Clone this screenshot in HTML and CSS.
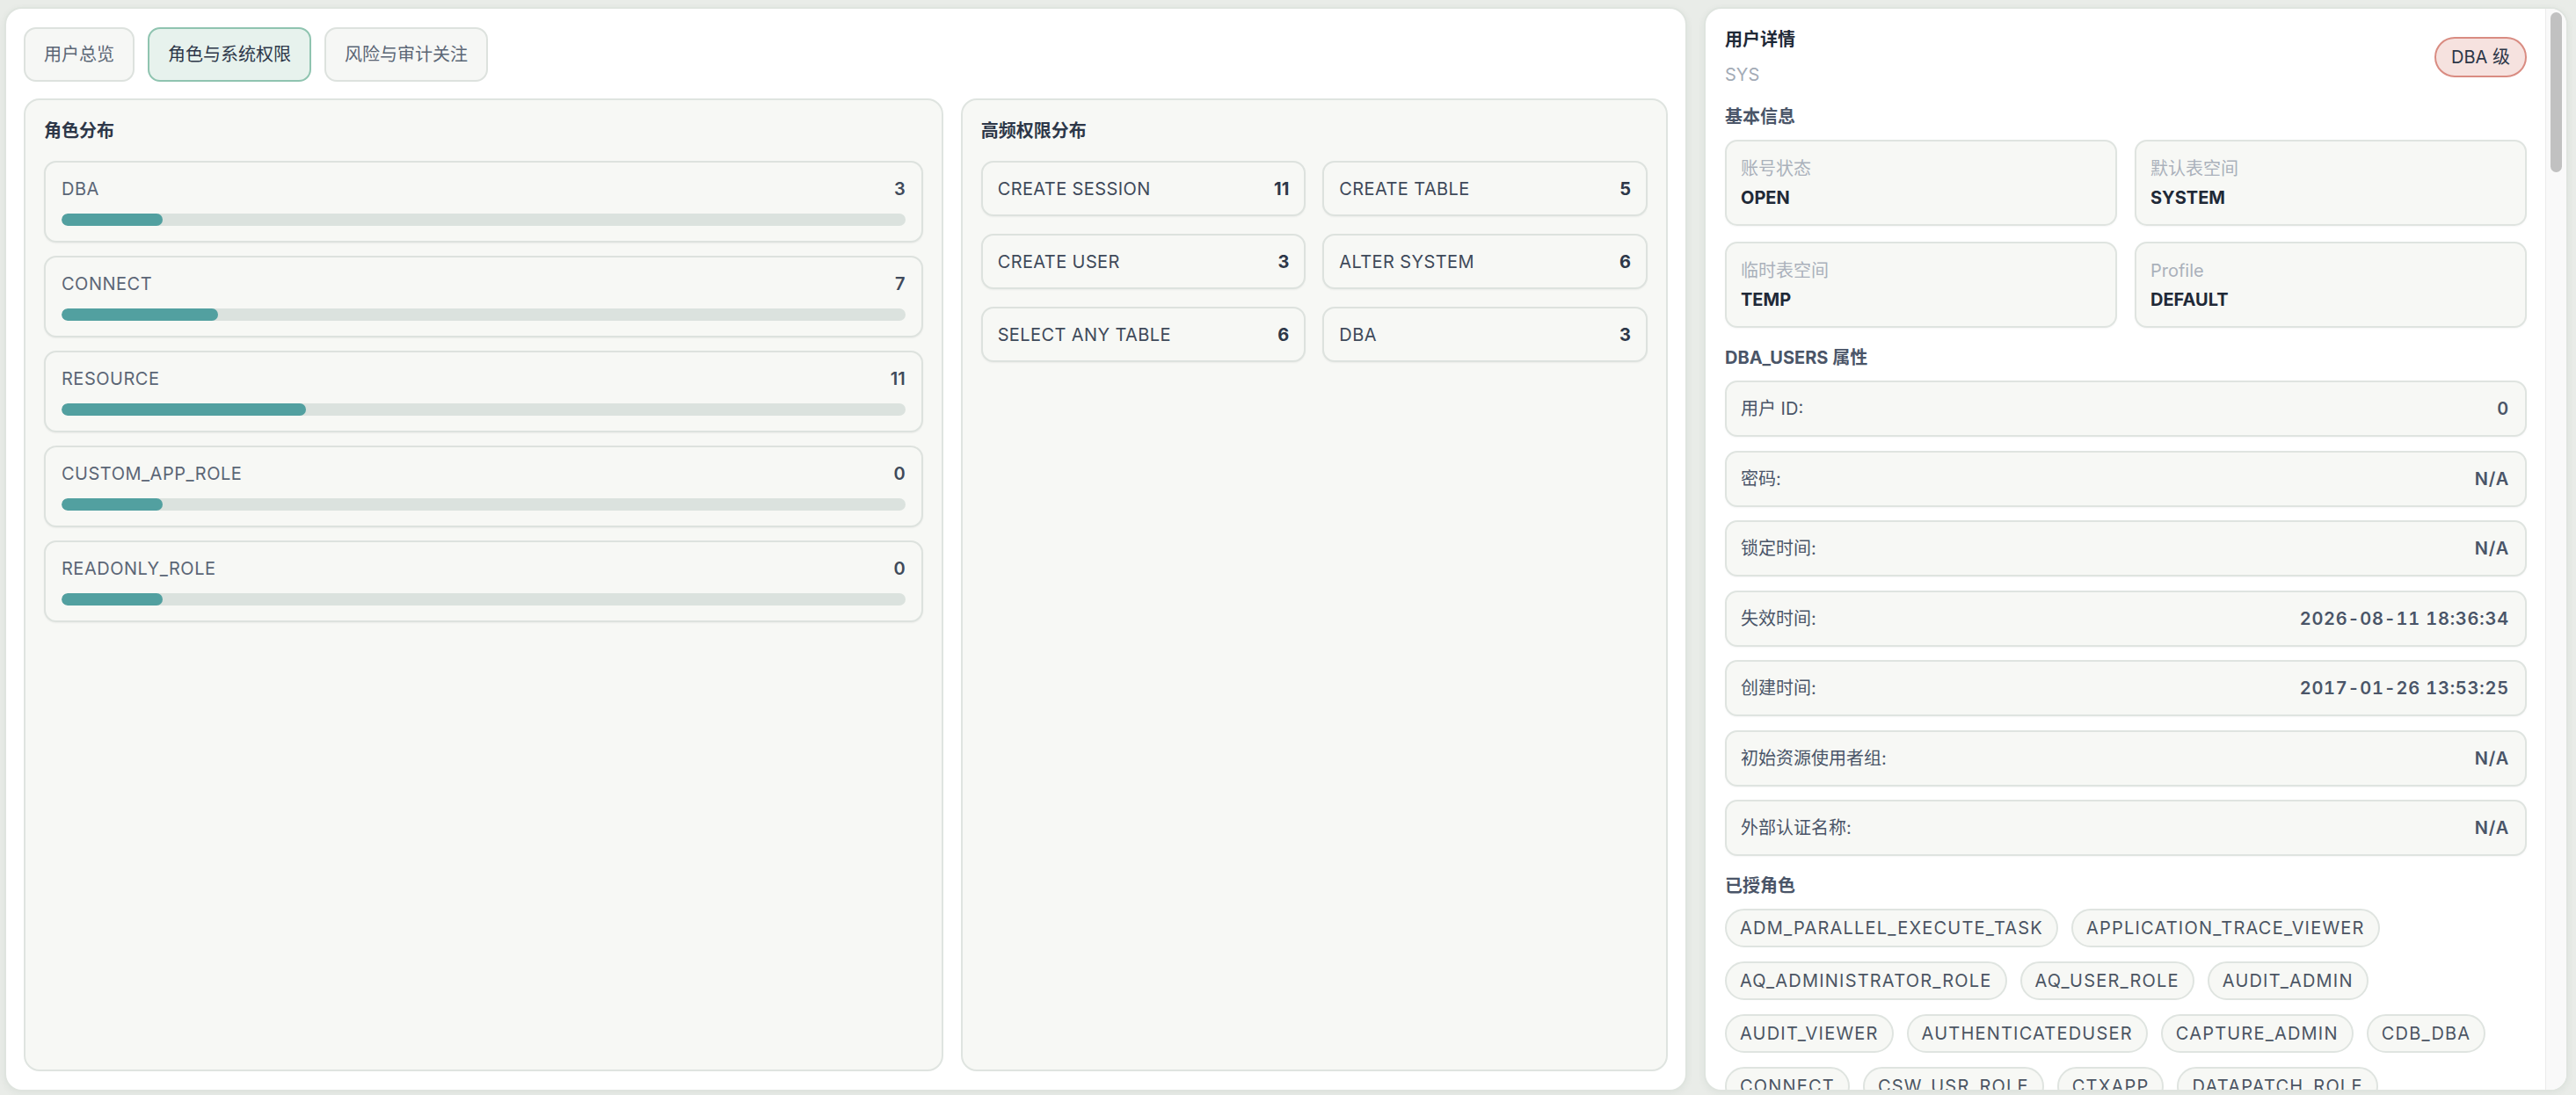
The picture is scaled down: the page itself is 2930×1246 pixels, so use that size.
FILE: index.html
```html
<!DOCTYPE html>
<html lang="zh-CN">
<head>
    <meta charset="UTF-8">
    <meta name="viewport" content="width=device-width, initial-scale=1.0">
    <title>用户权限 - 角色与系统权限</title>
    <link rel="stylesheet" href="styles.css">
</head>
<body>
    <div class="page">
        <section class="main-card">
            <div class="tabs">
                <div class="tab">用户总览</div>
                <div class="tab active">角色与系统权限</div>
                <div class="tab">风险与审计关注</div>
            </div>

            <div class="panels">
                <div class="panel">
                    <div class="panel-title">角色分布</div>
                    <div class="role-list">
                        <div class="role-item">
                            <div class="role-head"><span class="role-name">DBA</span><span class="role-count">3</span></div>
                            <div class="bar"><div class="bar-fill" style="width: 12%"></div></div>
                        </div>
                        <div class="role-item">
                            <div class="role-head"><span class="role-name">CONNECT</span><span class="role-count">7</span></div>
                            <div class="bar"><div class="bar-fill" style="width: 18.6%"></div></div>
                        </div>
                        <div class="role-item">
                            <div class="role-head"><span class="role-name">RESOURCE</span><span class="role-count">11</span></div>
                            <div class="bar"><div class="bar-fill" style="width: 29%"></div></div>
                        </div>
                        <div class="role-item">
                            <div class="role-head"><span class="role-name">CUSTOM_APP_ROLE</span><span class="role-count">0</span></div>
                            <div class="bar"><div class="bar-fill" style="width: 12%"></div></div>
                        </div>
                        <div class="role-item">
                            <div class="role-head"><span class="role-name">READONLY_ROLE</span><span class="role-count">0</span></div>
                            <div class="bar"><div class="bar-fill" style="width: 12%"></div></div>
                        </div>
                    </div>
                </div>

                <div class="panel">
                    <div class="panel-title">高频权限分布</div>
                    <div class="priv-grid">
                        <div class="priv-item"><span>CREATE SESSION</span><strong>11</strong></div>
                        <div class="priv-item"><span>CREATE TABLE</span><strong>5</strong></div>
                        <div class="priv-item"><span>CREATE USER</span><strong>3</strong></div>
                        <div class="priv-item"><span>ALTER SYSTEM</span><strong>6</strong></div>
                        <div class="priv-item"><span>SELECT ANY TABLE</span><strong>6</strong></div>
                        <div class="priv-item"><span>DBA</span><strong>3</strong></div>
                    </div>
                </div>
            </div>
        </section>

        <aside class="detail-card">
            <div class="detail-scroll">
                <div class="detail-head">
                    <div>
                        <div class="detail-title">用户详情</div>
                        <div class="detail-sub">SYS</div>
                    </div>
                    <div class="level-badge">DBA 级</div>
                </div>

                <div class="section-title">基本信息</div>
                <div class="info-grid">
                    <div class="info-card"><div class="info-label">账号状态</div><div class="info-value">OPEN</div></div>
                    <div class="info-card"><div class="info-label">默认表空间</div><div class="info-value">SYSTEM</div></div>
                    <div class="info-card"><div class="info-label">临时表空间</div><div class="info-value">TEMP</div></div>
                    <div class="info-card"><div class="info-label">Profile</div><div class="info-value">DEFAULT</div></div>
                </div>

                <div class="section-title">DBA_USERS 属性</div>
                <div class="attr-list">
                    <div class="attr-row"><span>用户 ID:</span><span class="attr-value">0</span></div>
                    <div class="attr-row"><span>密码:</span><span class="attr-value">N/A</span></div>
                    <div class="attr-row"><span>锁定时间:</span><span class="attr-value">N/A</span></div>
                    <div class="attr-row"><span>失效时间:</span><span class="attr-value">2026-08-11 18:36:34</span></div>
                    <div class="attr-row"><span>创建时间:</span><span class="attr-value">2017-01-26 13:53:25</span></div>
                    <div class="attr-row"><span>初始资源使用者组:</span><span class="attr-value">N/A</span></div>
                    <div class="attr-row"><span>外部认证名称:</span><span class="attr-value">N/A</span></div>
                </div>

                <div class="section-title">已授角色</div>
                <div class="tag-list">
                    <span class="tag">ADM_PARALLEL_EXECUTE_TASK</span>
                    <span class="tag">APPLICATION_TRACE_VIEWER</span>
                    <span class="tag">AQ_ADMINISTRATOR_ROLE</span>
                    <span class="tag">AQ_USER_ROLE</span>
                    <span class="tag">AUDIT_ADMIN</span>
                    <span class="tag">AUDIT_VIEWER</span>
                    <span class="tag">AUTHENTICATEDUSER</span>
                    <span class="tag">CAPTURE_ADMIN</span>
                    <span class="tag">CDB_DBA</span>
                    <span class="tag">CONNECT</span>
                    <span class="tag">CSW_USR_ROLE</span>
                    <span class="tag">CTXAPP</span>
                    <span class="tag">DATAPATCH_ROLE</span>
                    <span class="tag">DATAPUMP_EXP_FULL_DATABASE</span>
                    <span class="tag">DATAPUMP_IMP_FULL_DATABASE</span>
                    <span class="tag">DBA</span>
                    <span class="tag">DBFS_ROLE</span>
                    <span class="tag">DBJAVASCRIPT</span>
                    <span class="tag">DBMS_MDX_INTERNAL</span>
                    <span class="tag">EM_EXPRESS_ALL</span>
                    <span class="tag">EM_EXPRESS_BASIC</span>
                    <span class="tag">EXECUTE_CATALOG_ROLE</span>
                    <span class="tag">EXP_FULL_DATABASE</span>
                    <span class="tag">GATHER_SYSTEM_STATISTICS</span>
                    <span class="tag">GDS_CATALOG_SELECT</span>
                    <span class="tag">GGSYS_ROLE</span>
                    <span class="tag">GLOBAL_AQ_USER_ROLE</span>
                    <span class="tag">GSMADMIN_ROLE</span>
                    <span class="tag">GSMCATUSER_ROLE</span>
                    <span class="tag">GSMROOTUSER_ROLE</span>
                    <span class="tag">GSM_POOLADMIN_ROLE</span>
                    <span class="tag">HS_ADMIN_EXECUTE_ROLE</span>
                    <span class="tag">HS_ADMIN_ROLE</span>
                    <span class="tag">HS_ADMIN_SELECT_ROLE</span>
                    <span class="tag">IMP_FULL_DATABASE</span>
                    <span class="tag">JAVADEBUGPRIV</span>
                    <span class="tag">JAVAIDPRIV</span>
                    <span class="tag">JAVASYSPRIV</span>
                    <span class="tag">JAVAUSERPRIV</span>
                    <span class="tag">JAVA_ADMIN</span>
                    <span class="tag">JMXSERVER</span>
                    <span class="tag">LBAC_DBA</span>
                    <span class="tag">LOGSTDBY_ADMINISTRATOR</span>
                    <span class="tag">MAINTPLAN_APP</span>
                    <span class="tag">OEM_ADVISOR</span>
                    <span class="tag">OEM_MONITOR</span>
                    <span class="tag">OLAP_DBA</span>
                    <span class="tag">OLAP_USER</span>
                    <span class="tag">OLAP_XS_ADMIN</span>
                    <span class="tag">OPTIMIZER_PROCESSING_RATE</span>
                    <span class="tag">ORDADMIN</span>
                    <span class="tag">PDB_DBA</span>
                    <span class="tag">PROVISIONER</span>
                    <span class="tag">RDFCTX_ADMIN</span>
                    <span class="tag">RECOVERY_CATALOG_OWNER</span>
                    <span class="tag">RECOVERY_CATALOG_OWNER_VPD</span>
                    <span class="tag">RECOVERY_CATALOG_USER</span>
                    <span class="tag">RESOURCE</span>
                    <span class="tag">SCHEDULER_ADMIN</span>
                    <span class="tag">SELECT_CATALOG_ROLE</span>
                    <span class="tag">SODA_APP</span>
                    <span class="tag">SYSUMF_ROLE</span>
                    <span class="tag">WM_ADMIN_ROLE</span>
                    <span class="tag">XDBADMIN</span>
                    <span class="tag">XDB_SET_INVOKER</span>
                    <span class="tag">XDB_WEBSERVICES</span>
                    <span class="tag">XDB_WEBSERVICES_OVER_HTTP</span>
                    <span class="tag">XDB_WEBSERVICES_WITH_PUBLIC</span>
                    <span class="tag">XS_CACHE_ADMIN</span>
                    <span class="tag">XS_CONNECT</span>
                    <span class="tag">XS_NAMESPACE_ADMIN</span>
                    <span class="tag">XS_SESSION_ADMIN</span>
                </div>

                <div class="section-title">系统权限</div>
                <div class="tag-list">
                    <span class="tag">ADMINISTER ANY SQL TUNING SET</span>
                    <span class="tag">ADMINISTER DATABASE TRIGGER</span>
                    <span class="tag">ADMINISTER RESOURCE MANAGER</span>
                    <span class="tag">ADMINISTER SQL MANAGEMENT OBJECT</span>
                    <span class="tag">ADVISOR</span>
                    <span class="tag">ALTER ANY CLUSTER</span>
                    <span class="tag">ALTER ANY DIMENSION</span>
                    <span class="tag">ALTER ANY INDEX</span>
                    <span class="tag">ALTER ANY LIBRARY</span>
                    <span class="tag">ALTER ANY MATERIALIZED VIEW</span>
                    <span class="tag">ALTER ANY PROCEDURE</span>
                    <span class="tag">ALTER ANY ROLE</span>
                    <span class="tag">ALTER ANY SEQUENCE</span>
                    <span class="tag">ALTER ANY TABLE</span>
                    <span class="tag">ALTER ANY TRIGGER</span>
                    <span class="tag">ALTER ANY TYPE</span>
                    <span class="tag">ALTER DATABASE</span>
                    <span class="tag">ALTER PROFILE</span>
                    <span class="tag">ALTER SESSION</span>
                    <span class="tag">ALTER SYSTEM</span>
                    <span class="tag">ALTER TABLESPACE</span>
                    <span class="tag">ALTER USER</span>
                    <span class="tag">ANALYZE ANY</span>
                    <span class="tag">ANALYZE ANY DICTIONARY</span>
                    <span class="tag">AUDIT ANY</span>
                    <span class="tag">AUDIT SYSTEM</span>
                    <span class="tag">BACKUP ANY TABLE</span>
                    <span class="tag">BECOME USER</span>
                    <span class="tag">COMMENT ANY TABLE</span>
                    <span class="tag">CREATE ANY DIRECTORY</span>
                    <span class="tag">CREATE ANY INDEX</span>
                    <span class="tag">CREATE ANY JOB</span>
                    <span class="tag">CREATE ANY PROCEDURE</span>
                    <span class="tag">CREATE ANY SYNONYM</span>
                    <span class="tag">CREATE ANY TABLE</span>
                    <span class="tag">CREATE ANY TRIGGER</span>
                    <span class="tag">CREATE ANY VIEW</span>
                    <span class="tag">CREATE DATABASE LINK</span>
                    <span class="tag">CREATE JOB</span>
                    <span class="tag">CREATE MATERIALIZED VIEW</span>
                    <span class="tag">CREATE PROCEDURE</span>
                    <span class="tag">CREATE PROFILE</span>
                    <span class="tag">CREATE PUBLIC SYNONYM</span>
                    <span class="tag">CREATE ROLE</span>
                    <span class="tag">CREATE SEQUENCE</span>
                    <span class="tag">CREATE SESSION</span>
                    <span class="tag">CREATE SYNONYM</span>
                    <span class="tag">CREATE TABLE</span>
                    <span class="tag">CREATE TABLESPACE</span>
                    <span class="tag">CREATE TRIGGER</span>
                    <span class="tag">CREATE TYPE</span>
                    <span class="tag">CREATE USER</span>
                    <span class="tag">CREATE VIEW</span>
                    <span class="tag">DEBUG ANY PROCEDURE</span>
                    <span class="tag">DEBUG CONNECT SESSION</span>
                    <span class="tag">DELETE ANY TABLE</span>
                    <span class="tag">DROP ANY DIRECTORY</span>
                    <span class="tag">DROP ANY INDEX</span>
                    <span class="tag">DROP ANY PROCEDURE</span>
                    <span class="tag">DROP ANY ROLE</span>
                    <span class="tag">DROP ANY TABLE</span>
                    <span class="tag">DROP ANY VIEW</span>
                    <span class="tag">DROP PUBLIC SYNONYM</span>
                    <span class="tag">DROP TABLESPACE</span>
                    <span class="tag">DROP USER</span>
                    <span class="tag">EXECUTE ANY PROCEDURE</span>
                    <span class="tag">EXECUTE ANY TYPE</span>
                    <span class="tag">EXEMPT ACCESS POLICY</span>
                    <span class="tag">EXEMPT REDACTION POLICY</span>
                    <span class="tag">FLASHBACK ANY TABLE</span>
                    <span class="tag">FORCE ANY TRANSACTION</span>
                    <span class="tag">GRANT ANY OBJECT PRIVILEGE</span>
                    <span class="tag">GRANT ANY PRIVILEGE</span>
                    <span class="tag">GRANT ANY ROLE</span>
                    <span class="tag">INHERIT ANY PRIVILEGES</span>
                    <span class="tag">INSERT ANY TABLE</span>
                    <span class="tag">LOCK ANY TABLE</span>
                    <span class="tag">LOGMINING</span>
                    <span class="tag">MANAGE SCHEDULER</span>
                    <span class="tag">MANAGE TABLESPACE</span>
                    <span class="tag">QUERY REWRITE</span>
                    <span class="tag">READ ANY TABLE</span>
                    <span class="tag">RESTRICTED SESSION</span>
                    <span class="tag">RESUMABLE</span>
                    <span class="tag">SELECT ANY DICTIONARY</span>
                    <span class="tag">SELECT ANY SEQUENCE</span>
                    <span class="tag">SELECT ANY TABLE</span>
                    <span class="tag">SELECT ANY TRANSACTION</span>
                    <span class="tag">SET CONTAINER</span>
                    <span class="tag">UNLIMITED TABLESPACE</span>
                    <span class="tag">UPDATE ANY TABLE</span>
                </div>
            </div>
            <div class="scroll-track"><div class="scroll-thumb"></div></div>
        </aside>
    </div>
</body>
</html>
```

FILE: styles.css
```css
* {
    box-sizing: border-box;
}

body {
    margin: 0;
    background: #e9ece8;
    font-family: Inter, "Noto Sans CJK SC", sans-serif;
    font-size: 20px;
    line-height: 28px;
    color: #2d3748;
}

.page {
    height: 100vh;
    padding: 8px 9px 4px 5px;
    display: grid;
    grid-template-columns: 1fr 983px;
    gap: 19px;
}

.main-card,
.detail-card {
    background: #fff;
    border: 2px solid #dfe4df;
    border-radius: 20px;
    box-shadow: 0 2px 8px rgba(40, 60, 50, 0.06);
    min-height: 0;
}

.main-card {
    display: flex;
    flex-direction: column;
    gap: 19px;
    padding: 21px 20px;
}

/* tabs */
.tabs {
    display: flex;
    gap: 15px;
}

.tab {
    padding: 15px 21px;
    border: 2px solid #dde2de;
    border-radius: 14px;
    background: #f6f7f5;
    color: #5b6675;
    cursor: pointer;
}

.tab.active {
    background: #e7f2ed;
    border-color: #8fc4b0;
    color: #2d3748;
}

.panels {
    flex: 1;
    display: grid;
    grid-template-columns: 1.3fr 1fr;
    gap: 20px;
    min-height: 0;
}

.panel {
    background: #f7f8f5;
    border: 2px solid #dfe4e0;
    border-radius: 18px;
    padding: 21px;
}

.panel-title {
    font-weight: 700;
    color: #2d3748;
    margin-bottom: 20px;
}

/* role distribution */
.role-list {
    display: flex;
    flex-direction: column;
    gap: 15px;
}

.role-item {
    padding: 16px 18px 17px;
    border: 2px solid #dde2de;
    border-radius: 14px;
    background: #f7f8f5;
    box-shadow: 0 1px 2px rgba(0, 0, 0, 0.05);
}

.role-head {
    display: flex;
    justify-content: space-between;
    margin-bottom: 14px;
}

.role-name {
    color: #5b6676;
    letter-spacing: 0.5px;
}

.role-count {
    font-weight: 600;
    color: #3f4a5a;
}

.bar {
    height: 14px;
    border-radius: 7px;
    background: #dbe2de;
    overflow: hidden;
}

.bar-fill {
    height: 100%;
    border-radius: 7px;
    background: #52a0a0;
}

/* privileges */
.priv-grid {
    display: grid;
    grid-template-columns: 1fr 1fr;
    gap: 20px 19px;
}

.priv-item {
    display: flex;
    justify-content: space-between;
    padding: 16px 17px 15px;
    border: 2px solid #dde2de;
    border-radius: 14px;
    background: #f7f8f5;
    box-shadow: 0 1px 2px rgba(0, 0, 0, 0.05);
    color: #3f4a5a;
}

.priv-item span {
    letter-spacing: 0.4px;
}

.priv-item strong {
    font-weight: 700;
    color: #2d3748;
}

/* user detail */
.detail-card {
    display: flex;
    overflow: hidden;
}

.detail-scroll {
    flex: 1;
    min-width: 0;
    overflow-y: auto;
    scrollbar-width: none;
    padding: 21px 21px 24px 22px;
}

.scroll-track {
    position: relative;
    flex: 0 0 24px;
    background: #f9f9f9;
    border-left: 1px solid #ececec;
}

.scroll-thumb {
    position: absolute;
    top: 4px;
    left: 5px;
    right: 5px;
    height: 182px;
    border-radius: 7px;
    background: #c1c1c1;
}

.detail-head {
    display: flex;
    justify-content: space-between;
    align-items: center;
}

.detail-title {
    font-weight: 700;
    color: #1f2937;
}

.detail-sub {
    margin-top: 12px;
    color: #a3abb6;
}

.level-badge {
    padding: 7px 17px;
    border: 2px solid #d98c82;
    border-radius: 999px;
    background: #f6e2df;
    color: #2d3748;
}

.section-title {
    margin: 20px 0 12px;
    font-weight: 700;
    color: #4a5568;
}

.info-grid {
    display: grid;
    grid-template-columns: 1fr 1fr;
    gap: 18px 20px;
}

.info-card {
    padding: 17px 16px 16px;
    border: 2px solid #dfe4e0;
    border-radius: 14px;
    background: #f7f8f5;
    box-shadow: 0 1px 2px rgba(0, 0, 0, 0.04);
}

.info-label {
    color: #aab1bb;
}

.info-value {
    margin-top: 5px;
    font-weight: 700;
    color: #1f2937;
}

.attr-list {
    display: flex;
    flex-direction: column;
    gap: 15.5px;
}

.attr-row {
    display: flex;
    justify-content: space-between;
    padding: 16px 18px 16px 16px;
    border: 2px solid #dfe4e0;
    border-radius: 14px;
    background: #f7f8f5;
    box-shadow: 0 1px 2px rgba(0, 0, 0, 0.04);
    color: #4a5568;
}

.attr-value {
    font-weight: 600;
    font-variant-numeric: tabular-nums;
    letter-spacing: 0.8px;
}

.tag-list {
    display: flex;
    flex-wrap: wrap;
    gap: 16px 15px;
}

.tag {
    padding: 6px 15px;
    border: 2px solid #dfe4e0;
    border-radius: 22px;
    background: #f7f8f5;
    color: #4b5563;
    letter-spacing: 1.2px;
}
```
